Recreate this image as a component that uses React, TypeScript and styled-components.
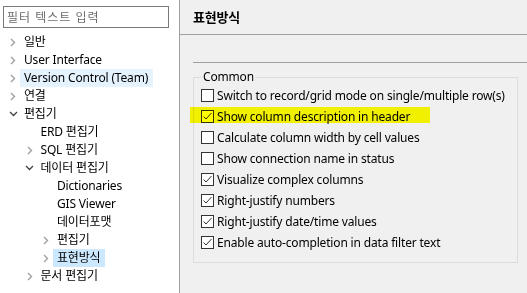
import React from 'react';
import styled, {createGlobalStyle} from 'styled-components';

const GlobalStyle = createGlobalStyle`
  html, body {
    margin: 0;
    padding: 0;
    background: #f0f0f0;
  }
  body {
    font-family: 'Noto Sans', 'Noto Sans CJK KR', sans-serif;
    font-size: 12px;
    letter-spacing: -0.17px;
    color: #000;
  }
`;

const LayoutRoot = styled.div`
  display: flex;
  width: 527px;
  height: 293px;
  overflow: hidden;
`;

const Sidebar = styled.div`
  width: 179px;
  flex: none;
  background: #fff;
  border-right: 1px solid #a0a0a0;
  display: flex;
  flex-direction: column;
`;

const FilterInput = styled.input`
  box-sizing: border-box;
  margin: 6px 0 0 3px;
  width: 166px;
  height: 22px;
  border: 1px solid #7a7a7a;
  padding: 0 3px;
  font: inherit;
  font-size: 12px;
  letter-spacing: 1px;
  outline: none;
  &::placeholder {
    color: #6d6d6d;
  }
`;

const Tree = styled.ul`
  list-style: none;
  margin: 5px 0 0;
  padding: 0;
`;

const TreeRow = styled.li<{depth: number}>`
  display: flex;
  align-items: center;
  height: 18px;
  padding-left: ${({depth}) => 6 + depth * 16.5}px;
  white-space: nowrap;
`;

const Toggle = styled.span`
  width: 14px;
  height: 18px;
  flex: none;
  display: flex;
  align-items: center;
  justify-content: center;
`;

const TreeLabel = styled.span<{state?: 'hover' | 'selected'}>`
  height: 18px;
  line-height: 18px;
  padding: 0 5px 0 4px;
  background: ${({state}) => (state === 'selected' ? '#cce8ff' : state === 'hover' ? '#e5f3ff' : 'transparent')};
`;

const Content = styled.div`
  flex: 1;
  display: flex;
  flex-direction: column;
  background: #f0f0f0;
`;

const Title = styled.div`
  height: 34px;
  line-height: 34px;
  padding-left: 13px;
  font-size: 13px;
  font-weight: bold;
  border-bottom: 1px solid #a0a0a0;
`;

const Body = styled.div`
  padding: 27px 9px 0 13px;
`;

const Separator = styled.div`
  height: 1px;
  background: #a0a0a0;
  margin-right: -9px;
`;

const Group = styled.fieldset`
  margin: 6px 0 0;
  padding: 0 0 9px 7px;
  border: 1px solid #dcdcdc;
  min-width: 0;
`;

const Legend = styled.legend`
  padding: 0 2px;
  line-height: 16px;
  color: #000;
`;

const OptionRow = styled.label<{marked?: boolean}>`
  position: relative;
  display: flex;
  align-items: center;
  gap: 3px;
  height: 21px;
  white-space: nowrap;

  ${({marked}) =>
    marked &&
    `
    &::after {
      content: '';
      position: absolute;
      left: -11px;
      top: 1px;
      width: 240px;
      height: 16px;
      background: #ffff00;
      mix-blend-mode: multiply;
      pointer-events: none;
    }
  `}
`;

const Box = styled.span`
  box-sizing: border-box;
  width: 13px;
  height: 13px;
  flex: none;
  border: 1px solid #333;
  background: #fff;
  display: flex;
  align-items: center;
  justify-content: center;
`;

const Chevron: React.FC<{open: boolean}> = ({open}) =>
  open ? (
    <svg width="9" height="6" viewBox="0 0 9 6">
      <polyline points="1,1 4.5,4.5 8,1" fill="none" stroke="#404040" strokeWidth="1.3" />
    </svg>
  ) : (
    <svg width="6" height="9" viewBox="0 0 6 9">
      <polyline points="1,1 4.5,4.5 1,8" fill="none" stroke="#a0a0a0" strokeWidth="1.4" />
    </svg>
  );

const Check = () => (
  <svg width="11" height="11" viewBox="0 0 11 11">
    <polyline points="1.5,5.5 4,8 9.5,2" fill="none" stroke="#333" strokeWidth="1" />
  </svg>
);

type Node = {depth: number; label: string; open?: boolean; state?: 'hover' | 'selected'};

const nodes: Node[] = [
  {depth: 0, label: '일반', open: false},
  {depth: 0, label: 'User Interface', open: false},
  {depth: 0, label: 'Version Control (Team)', open: false, state: 'hover'},
  {depth: 0, label: '연결', open: false},
  {depth: 0, label: '편집기', open: true},
  {depth: 1, label: 'ERD 편집기'},
  {depth: 1, label: 'SQL 편집기', open: false},
  {depth: 1, label: '데이터 편집기', open: true},
  {depth: 2, label: 'Dictionaries'},
  {depth: 2, label: 'GIS Viewer'},
  {depth: 2, label: '데이터포맷'},
  {depth: 2, label: '편집기', open: false},
  {depth: 2, label: '표현방식', open: false, state: 'selected'},
  {depth: 1, label: '문서 편집기', open: false},
];

const options = [
  {label: 'Switch to record/grid mode on single/multiple row(s)', checked: false},
  {label: 'Show column description in header', checked: true, marked: true},
  {label: 'Calculate column width by cell values', checked: false},
  {label: 'Show connection name in status', checked: false},
  {label: 'Visualize complex columns', checked: true},
  {label: 'Right-justify numbers', checked: true},
  {label: 'Right-justify date/time values', checked: true},
  {label: 'Enable auto-completion in data filter text', checked: true},
];

export default function App() {
  return (
    <>
      <GlobalStyle />
      <LayoutRoot>
        <Sidebar>
          <FilterInput placeholder="필터 텍스트 입력" />
          <Tree>
            {nodes.map((n, i) => (
              <TreeRow key={i} depth={n.depth}>
                <Toggle>{n.open !== undefined && <Chevron open={n.open} />}</Toggle>
                <TreeLabel state={n.state}>{n.label}</TreeLabel>
              </TreeRow>
            ))}
          </Tree>
        </Sidebar>
        <Content>
          <Title>표현방식</Title>
          <Body>
            <Separator />
            <Group>
              <Legend>Common</Legend>
              {options.map((o) => (
                <OptionRow key={o.label} marked={o.marked}>
                  <Box>{o.checked && <Check />}</Box>
                  {o.label}
                </OptionRow>
              ))}
            </Group>
          </Body>
        </Content>
      </LayoutRoot>
    </>
  );
}
